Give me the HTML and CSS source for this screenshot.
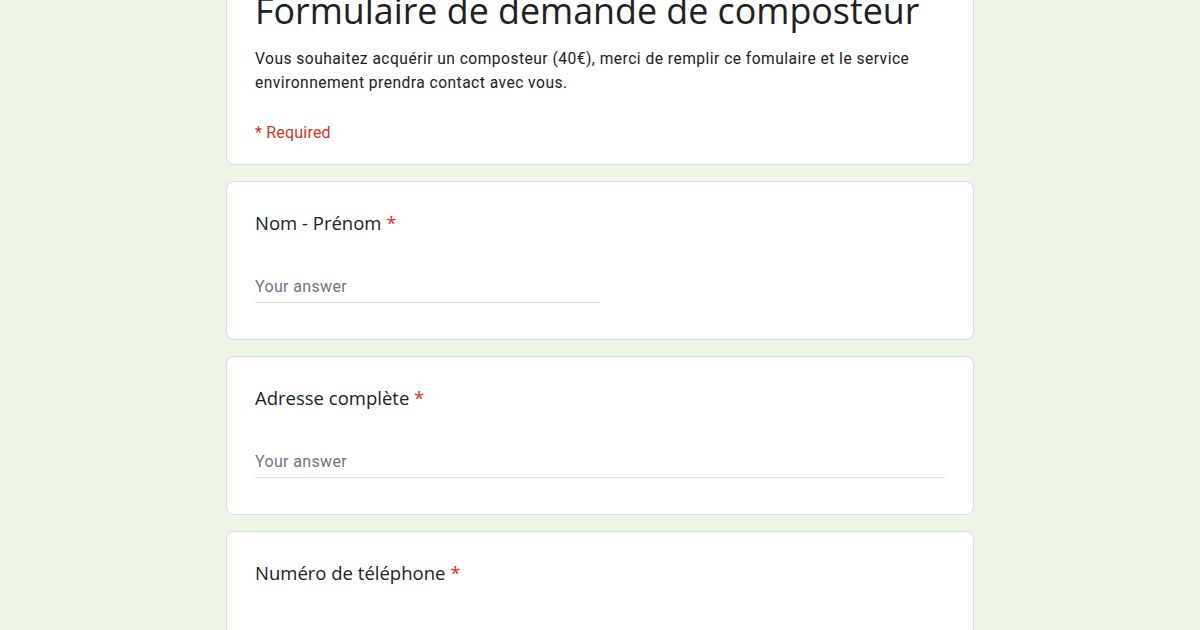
FILE: index.html
```html
<!DOCTYPE html>
<html lang="fr">
<head>
<meta charset="utf-8">
<title>Formulaire de demande de composteur</title>
<link rel="stylesheet" href="styles.css">
</head>
<body>
<main class="form">
  <section class="card header-card">
    <h1 class="form-title">Formulaire de demande de composteur</h1>
    <p class="form-desc">Vous souhaitez acquérir un composteur (40€), merci de remplir ce fomulaire et le service environnement prendra contact avec vous.</p>
    <p class="required-note">* Required</p>
  </section>
  <section class="card question">
    <div class="q-title">Nom - Prénom <span class="star">*</span></div>
    <div class="answer short"><span class="placeholder">Your answer</span></div>
  </section>
  <section class="card question">
    <div class="q-title">Adresse complète <span class="star">*</span></div>
    <div class="answer long"><span class="placeholder">Your answer</span></div>
  </section>
  <section class="card question">
    <div class="q-title">Numéro de téléphone <span class="star">*</span></div>
    <div class="answer short"><span class="placeholder">Your answer</span></div>
  </section>
</main>
</body>
</html>
```
FILE: styles.css
```css
html, body {
  margin: 0;
  padding: 0;
}
body {
  background: #edf4e8;
  font-family: Roboto, "Liberation Sans", sans-serif;
  color: #202124;
  height: 630px;
  overflow: hidden;
}
.form {
  width: 748px;
  margin: -21px auto 0;
  display: flex;
  flex-direction: column;
  gap: 16px;
}
.card {
  background: #fff;
  border: 1px solid #dadce0;
  border-radius: 8px;
  box-sizing: border-box;
  padding: 0 28px;
}
.header-card {
  padding-top: 8px;
  padding-bottom: 19px;
}
.form-title {
  font-family: "Open Sans", sans-serif;
  font-weight: 400;
  font-size: 35.8px;
  line-height: 44px;
  margin: 0;
  color: #202124;
  white-space: nowrap;
}
.form-desc {
  margin: 15px 0 0;
  font-size: 15.6px;
  line-height: 24px;
  letter-spacing: 0.47px;
  color: #202124;
}
.required-note {
  margin: 26px 0 0;
  font-size: 16px;
  line-height: 24px;
  color: #d93025;
  letter-spacing: 0.2px;
}
.question {
  padding-top: 29px;
  padding-bottom: 36px;
}
.q-title {
  font-family: "Open Sans", sans-serif;
  font-size: 18.5px;
  line-height: 24px;
  color: #202124;
}
.star {
  color: #d93025;
}
.answer {
  margin-top: 42px;
  padding-bottom: 5px;
  border-bottom: 1px solid #dadce0;
  font-size: 16px;
  line-height: 20px;
  letter-spacing: 0.35px;
}
.answer.short {
  width: 345px;
}
.placeholder {
  color: #70757a;
}
```
